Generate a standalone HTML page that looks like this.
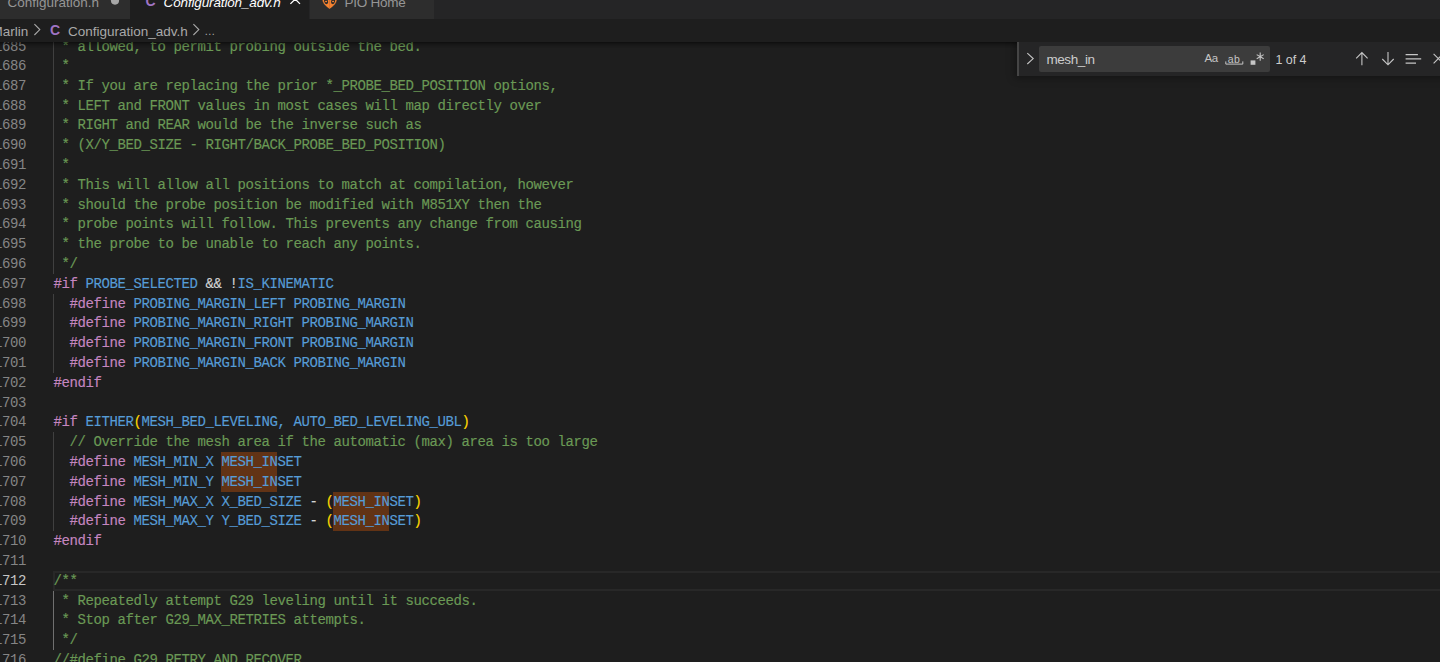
<!DOCTYPE html>
<html lang="en">
<head>
<meta charset="utf-8">
<title>Configuration_adv.h - Marlin</title>
<style>
html,body{margin:0;padding:0;}
body{width:1440px;height:662px;overflow:hidden;background:#1e1e1e;position:relative;font-family:"Liberation Sans",sans-serif;}
#editor{position:absolute;left:0;top:0;width:1440px;height:662px;overflow:hidden;background:#1e1e1e;}
.ln{position:absolute;left:-30px;width:55.5px;text-align:right;height:19.8px;line-height:19.8px;color:#858585;font-family:"Liberation Mono",monospace;font-size:14px;letter-spacing:-0.4014px;margin-top:1px;margin-left:0.5px;white-space:pre;}
.ln.cur{color:#c6c6c6;}
.cl{position:absolute;left:53px;height:19.8px;line-height:19.8px;font-family:"Liberation Mono",monospace;font-size:14px;letter-spacing:-0.4014px;margin-top:1px;margin-left:0.5px;white-space:pre;color:#d4d4d4;-webkit-text-stroke:0.15px;}
.c{color:#6a9955;}
.p{color:#c586c0;}
.m{color:#569cd6;}
.w{color:#d4d4d4;}
.g{color:#ffd700;}
.hl{position:absolute;width:56px;height:19.8px;background:#623315;}
.guide{position:absolute;width:1px;background:#404040;}
.guide.act{background:#707070;}
#curline{position:absolute;left:53px;width:1400px;height:15.8px;border:2px solid #282828;top:570.80px;}
#tabs{position:absolute;left:0;top:0;width:1440px;height:19px;background:#252526;overflow:hidden;}
.tab{position:absolute;top:0;height:19px;overflow:hidden;}
.tab span{position:absolute;top:-9px;height:23px;line-height:23px;font-size:13.5px;color:#969696;white-space:nowrap;}
#bread{position:absolute;left:0;top:19px;width:1440px;height:23px;background:#1e1e1e;overflow:hidden;}
#bread span{position:absolute;top:0.5px;height:23px;line-height:23px;font-size:13.5px;color:#a9a9a9;white-space:nowrap;}
#bshadow{position:absolute;left:0;top:42px;width:1440px;height:6px;box-shadow:#000 0 6px 6px -6px inset;}
#find{position:absolute;left:1017px;top:42px;width:440px;height:34px;background:#252526;box-shadow:0 0 8px 2px rgba(0,0,0,.36);}
#find .sash{position:absolute;left:0;top:0;width:2.2px;height:34px;background:#454545;}
#find .inp{position:absolute;left:22px;top:4px;width:230.7px;height:26px;background:#3c3c3c;border-radius:2px;}
#find span{position:absolute;white-space:nowrap;color:#cccccc;}
#find .q{left:29.4px;top:4.9px;height:26px;line-height:26px;font-size:13.5px;letter-spacing:-0.4px;}
#find .cnt{left:258.6px;top:4.6px;height:26px;line-height:26px;font-size:12.5px;letter-spacing:-0.1px;}
#find .aa{left:187.6px;top:3.4px;height:26px;line-height:26px;font-size:11.5px;letter-spacing:-0.5px;color:#c5c5c5;}
#find .ab{left:210.8px;top:3.6px;height:26px;line-height:26px;font-size:10.5px;letter-spacing:0.3px;color:#c5c5c5;}
#ico{position:absolute;left:0;top:0;width:1440px;height:662px;pointer-events:none;}
</style>
</head>
<body>
<div id="editor">
<div id="curline"></div>
<div class="hl" style="left:221.0px;top:452.00px"></div>
<div class="hl" style="left:221.0px;top:471.80px"></div>
<div class="hl" style="left:333.0px;top:491.60px"></div>
<div class="hl" style="left:333.0px;top:511.40px"></div>

<div class="guide" style="left:53px;top:36.20px;height:237.60px"></div>
<div class="guide" style="left:53px;top:293.60px;height:79.20px"></div>
<div class="guide" style="left:53px;top:432.20px;height:99.00px"></div>
<div class="guide act" style="left:53px;top:590.60px;height:59.40px"></div>

<div class="ln" style="top:36.80px">1685</div>
<div class="cl" style="top:36.80px"><span class="c"> * allowed, to permit probing outside the bed.</span></div>
<div class="ln" style="top:56.00px">1686</div>
<div class="cl" style="top:56.00px"><span class="c"> *</span></div>
<div class="ln" style="top:75.80px">1687</div>
<div class="cl" style="top:75.80px"><span class="c"> * If you are replacing the prior *_PROBE_BED_POSITION options,</span></div>
<div class="ln" style="top:95.60px">1688</div>
<div class="cl" style="top:95.60px"><span class="c"> * LEFT and FRONT values in most cases will map directly over</span></div>
<div class="ln" style="top:115.40px">1689</div>
<div class="cl" style="top:115.40px"><span class="c"> * RIGHT and REAR would be the inverse such as</span></div>
<div class="ln" style="top:135.20px">1690</div>
<div class="cl" style="top:135.20px"><span class="c"> * (X/Y_BED_SIZE - RIGHT/BACK_PROBE_BED_POSITION)</span></div>
<div class="ln" style="top:155.00px">1691</div>
<div class="cl" style="top:155.00px"><span class="c"> *</span></div>
<div class="ln" style="top:174.80px">1692</div>
<div class="cl" style="top:174.80px"><span class="c"> * This will allow all positions to match at compilation, however</span></div>
<div class="ln" style="top:194.60px">1693</div>
<div class="cl" style="top:194.60px"><span class="c"> * should the probe position be modified with M851XY then the</span></div>
<div class="ln" style="top:214.40px">1694</div>
<div class="cl" style="top:214.40px"><span class="c"> * probe points will follow. This prevents any change from causing</span></div>
<div class="ln" style="top:234.20px">1695</div>
<div class="cl" style="top:234.20px"><span class="c"> * the probe to be unable to reach any points.</span></div>
<div class="ln" style="top:254.00px">1696</div>
<div class="cl" style="top:254.00px"><span class="c"> */</span></div>
<div class="ln" style="top:273.80px">1697</div>
<div class="cl" style="top:273.80px"><span class="p">#if</span><span class="w"> </span><span class="m">PROBE_SELECTED</span><span class="w"> &amp;&amp; !</span><span class="m">IS_KINEMATIC</span></div>
<div class="ln" style="top:293.60px">1698</div>
<div class="cl" style="top:293.60px"><span class="w">  </span><span class="p">#define</span><span class="w"> </span><span class="m">PROBING_MARGIN_LEFT PROBING_MARGIN</span></div>
<div class="ln" style="top:313.40px">1699</div>
<div class="cl" style="top:313.40px"><span class="w">  </span><span class="p">#define</span><span class="w"> </span><span class="m">PROBING_MARGIN_RIGHT PROBING_MARGIN</span></div>
<div class="ln" style="top:333.20px">1700</div>
<div class="cl" style="top:333.20px"><span class="w">  </span><span class="p">#define</span><span class="w"> </span><span class="m">PROBING_MARGIN_FRONT PROBING_MARGIN</span></div>
<div class="ln" style="top:353.00px">1701</div>
<div class="cl" style="top:353.00px"><span class="w">  </span><span class="p">#define</span><span class="w"> </span><span class="m">PROBING_MARGIN_BACK PROBING_MARGIN</span></div>
<div class="ln" style="top:372.80px">1702</div>
<div class="cl" style="top:372.80px"><span class="p">#endif</span></div>
<div class="ln" style="top:392.60px">1703</div>
<div class="ln" style="top:412.40px">1704</div>
<div class="cl" style="top:412.40px"><span class="p">#if</span><span class="w"> </span><span class="m">EITHER</span><span class="g">(</span><span class="m">MESH_BED_LEVELING, AUTO_BED_LEVELING_UBL</span><span class="g">)</span></div>
<div class="ln" style="top:432.20px">1705</div>
<div class="cl" style="top:432.20px"><span class="c">  // Override the mesh area if the automatic (max) area is too large</span></div>
<div class="ln" style="top:452.00px">1706</div>
<div class="cl" style="top:452.00px"><span class="w">  </span><span class="p">#define</span><span class="w"> </span><span class="m">MESH_MIN_X MESH_INSET</span></div>
<div class="ln" style="top:471.80px">1707</div>
<div class="cl" style="top:471.80px"><span class="w">  </span><span class="p">#define</span><span class="w"> </span><span class="m">MESH_MIN_Y MESH_INSET</span></div>
<div class="ln" style="top:491.60px">1708</div>
<div class="cl" style="top:491.60px"><span class="w">  </span><span class="p">#define</span><span class="w"> </span><span class="m">MESH_MAX_X X_BED_SIZE</span><span class="w"> - </span><span class="g">(</span><span class="m">MESH_INSET</span><span class="g">)</span></div>
<div class="ln" style="top:511.40px">1709</div>
<div class="cl" style="top:511.40px"><span class="w">  </span><span class="p">#define</span><span class="w"> </span><span class="m">MESH_MAX_Y Y_BED_SIZE</span><span class="w"> - </span><span class="g">(</span><span class="m">MESH_INSET</span><span class="g">)</span></div>
<div class="ln" style="top:531.20px">1710</div>
<div class="cl" style="top:531.20px"><span class="p">#endif</span></div>
<div class="ln" style="top:551.00px">1711</div>
<div class="ln cur" style="top:570.80px">1712</div>
<div class="cl" style="top:570.80px"><span class="c">/**</span></div>
<div class="ln" style="top:590.60px">1713</div>
<div class="cl" style="top:590.60px"><span class="c"> * Repeatedly attempt G29 leveling until it succeeds.</span></div>
<div class="ln" style="top:610.40px">1714</div>
<div class="cl" style="top:610.40px"><span class="c"> * Stop after G29_MAX_RETRIES attempts.</span></div>
<div class="ln" style="top:630.20px">1715</div>
<div class="cl" style="top:630.20px"><span class="c"> */</span></div>
<div class="ln" style="top:650.00px">1716</div>
<div class="cl" style="top:650.00px"><span class="c">//#define G29_RETRY_AND_RECOVER</span></div>
</div>
<div id="bshadow"></div>
<div id="find">
<div class="sash"></div>
<div class="inp"></div>
<span class="q">mesh_in</span>
<span class="aa">Aa</span>
<span class="ab">ab</span>
<span class="cnt">1 of 4</span>
</div>
<div id="bread">
<span style="left:-8.6px">Marlin</span>
<span style="left:49.9px;top:0.3px;font-size:14px;font-weight:bold;color:#a074c4">C</span>
<span style="left:68px">Configuration_adv.h</span>
<span style="left:204.3px;letter-spacing:0;font-size:11px;top:1.2px">…</span>
</div>
<div id="tabs">
<div class="tab" style="left:0;width:129.6px;background:#2d2d2d"><span style="left:7.4px">Configuration.h</span></div>
<div class="tab" style="left:130px;width:179.3px;background:#1e1e1e"><span style="left:15.4px;top:-9.6px;font-size:14px;font-weight:bold;color:#a074c4">C</span><span style="left:33.6px;font-style:italic;color:#ffffff;letter-spacing:-0.15px">Configuration_adv.h</span></div>
<div class="tab" style="left:309.7px;width:124.5px;background:#2d2d2d"><span style="left:34.8px;letter-spacing:-0.25px">PIO Home</span></div>
</div>
<svg id="ico" width="1440" height="662" viewBox="0 0 1440 662" fill="none" stroke-linecap="butt" stroke-linejoin="miter">
<!-- modified dot on first tab -->
<circle cx="115" cy="0.6" r="4.1" fill="#a6a6a6"/>
<!-- close x on active tab -->
<path d="M290.4 3.9 L295.2 -0.9 L300 3.9" stroke="#ffffff" stroke-width="1.3"/>
<!-- PIO icon -->
<path d="M321.9 -3 C321.9 3.8 326.4 6.8 329.6 9.1 C332.8 6.8 337.3 3.8 337.3 -3 Z" fill="#f5822f" stroke="#2b2f36" stroke-width="0.4"/>
<path d="M328.9 -3 L330.3 -3 L329.9 8 L329.3 8 Z" fill="#d27132"/>
<ellipse cx="326.1" cy="1.3" rx="1.9" ry="2.9" fill="#2e2b2b" transform="rotate(-14 326.1 1.3)"/>
<ellipse cx="333.1" cy="1.3" rx="1.9" ry="2.9" fill="#2e2b2b" transform="rotate(14 333.1 1.3)"/>
<ellipse cx="326.1" cy="1.5" rx="1.1" ry="0.8" fill="#f5822f"/>
<ellipse cx="333.1" cy="1.5" rx="1.1" ry="0.8" fill="#f5822f"/>
<!-- breadcrumb chevrons -->
<path d="M34.4 24.2 L39.8 29.6 L34.4 35" stroke="#a9a9a9" stroke-width="1.1"/>
<path d="M193.4 24.2 L198.8 29.6 L193.4 35" stroke="#a9a9a9" stroke-width="1.1"/>
<!-- find: toggle replace chevron -->
<path d="M1027.3 53.2 L1033.2 58.6 L1027.3 64" stroke="#c5c5c5" stroke-width="1.1"/>
<!-- whole word bracket -->
<path d="M1225.8 61.4 L1225.8 64.1 L1242.8 64.1 L1242.8 61.4" stroke="#c5c5c5" stroke-width="1"/>
<!-- regex -->
<rect x="1250.6" y="60.4" width="4.8" height="4.4" fill="#c5c5c5"/>
<path d="M1260.2 52.6 L1260.2 60.8 M1256.7 54.6 L1263.7 58.8 M1263.7 54.6 L1256.7 58.8" stroke="#c5c5c5" stroke-width="1.1"/>
<!-- up arrow -->
<path d="M1361.9 52.4 L1361.9 65.2 M1356.2 58.3 L1361.9 52.5 L1367.6 58.3" stroke="#c5c5c5" stroke-width="1.1"/>
<!-- down arrow -->
<path d="M1388 52 L1388 64.8 M1382.3 59 L1388 64.8 L1393.7 59" stroke="#c5c5c5" stroke-width="1.1"/>
<!-- find in selection -->
<path d="M1405.6 54.7 L1417.9 54.7 M1405.6 58.9 L1421.2 58.9 M1405.6 63.1 L1416 63.1" stroke="#c5c5c5" stroke-width="1.2"/>
<!-- close -->
<path d="M1433.6 53.9 L1443 63.3 M1443 53.9 L1433.6 63.3" stroke="#c5c5c5" stroke-width="1.1"/>
</svg>
</body>
</html>
